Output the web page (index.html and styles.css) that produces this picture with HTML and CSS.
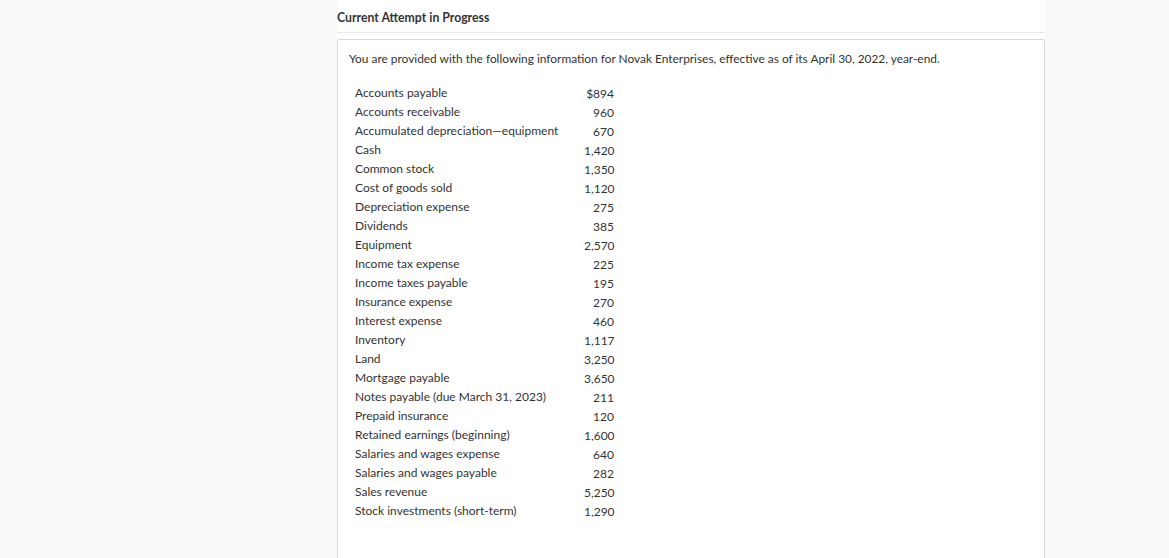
FILE: index.html
```html
<!DOCTYPE html>
<html lang="en">
<head>
<meta charset="utf-8">
<title>Current Attempt in Progress</title>
<link rel="stylesheet" href="styles.css">
</head>
<body>
<div class="layout">
  <div class="side"></div>
  <main class="panel">
    <header class="panel-head">Current Attempt in Progress</header>
    <section class="question">
      <p class="intro">You are provided with the following information for Novak Enterprises, effective as of its April 30, 2022, year-end.</p>
      <div class="data">
        <span class="label">Accounts payable</span><span class="num">$894</span>
        <span class="label">Accounts receivable</span><span class="num">960</span>
        <span class="label">Accumulated depreciation—equipment</span><span class="num">670</span>
        <span class="label">Cash</span><span class="num">1,420</span>
        <span class="label">Common stock</span><span class="num">1,350</span>
        <span class="label">Cost of goods sold</span><span class="num">1,120</span>
        <span class="label">Depreciation expense</span><span class="num">275</span>
        <span class="label">Dividends</span><span class="num">385</span>
        <span class="label">Equipment</span><span class="num">2,570</span>
        <span class="label">Income tax expense</span><span class="num">225</span>
        <span class="label">Income taxes payable</span><span class="num">195</span>
        <span class="label">Insurance expense</span><span class="num">270</span>
        <span class="label">Interest expense</span><span class="num">460</span>
        <span class="label">Inventory</span><span class="num">1,117</span>
        <span class="label">Land</span><span class="num">3,250</span>
        <span class="label">Mortgage payable</span><span class="num">3,650</span>
        <span class="label">Notes payable (due March 31, 2023)</span><span class="num">211</span>
        <span class="label">Prepaid insurance</span><span class="num">120</span>
        <span class="label">Retained earnings (beginning)</span><span class="num">1,600</span>
        <span class="label">Salaries and wages expense</span><span class="num">640</span>
        <span class="label">Salaries and wages payable</span><span class="num">282</span>
        <span class="label">Sales revenue</span><span class="num">5,250</span>
        <span class="label">Stock investments (short-term)</span><span class="num">1,290</span>
      </div>
    </section>
  </main>
</div>
</body>
</html>
```

FILE: styles.css
```css
html, body {
  margin: 0;
  padding: 0;
  height: 100%;
}
body {
  background: #f9f9f9;
  font-family: Lato, "Open Sans", "Liberation Sans", sans-serif;
  color: #333;
  overflow: hidden;
}
.layout {
  display: flex;
  min-height: 100%;
}
.side {
  width: 337px;
  flex: none;
}
.panel {
  width: 708px;
  flex: none;
  background: #fff;
  min-height: 558px;
}
.panel-head {
  font-size: 12.25px;
  font-weight: 700;
  line-height: 14px;
  padding: 11px 0 7px;
  border-bottom: 1px solid #ebebeb;
  color: #333;
}
.question {
  margin-top: 6px;
  border: 1px solid #d8d8d8;
  border-bottom: none;
  border-radius: 3px 3px 0 0;
  padding: 12px 11px 40px;
  min-height: 520px;
  box-sizing: border-box;
}
.intro {
  margin: 0;
  font-size: 11.9px;
  line-height: 14px;
}
.data {
  display: grid;
  grid-template-columns: 229px 30px;
  grid-auto-rows: 19px;
  margin: 17px 0 0 6px;
  font-size: 12px;
  line-height: 19px;
}
.num {
  text-align: right;
  padding-top: 1px;
}
```
